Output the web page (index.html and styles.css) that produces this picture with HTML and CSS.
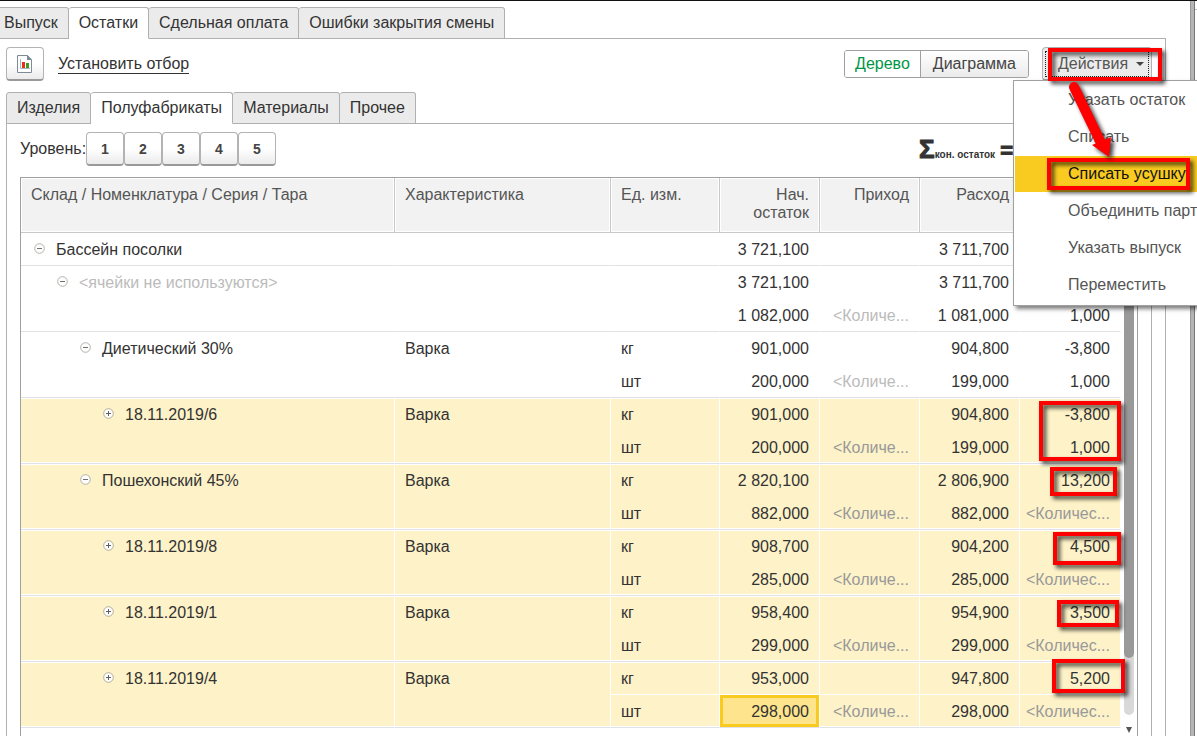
FILE: index.html
```html
<!DOCTYPE html>
<html lang="ru">
<head>
<meta charset="utf-8">
<title>Остатки</title>
<link rel="stylesheet" href="styles.css">
</head>
<body>
<svg class="defs" aria-hidden="true">
  <symbol id="minus" viewBox="0 0 11 11"><circle cx="5.5" cy="5.5" r="4.8" fill="#fff" stroke="#b3b0a8"/><path d="M3 5.5h5" stroke="#707070"/></symbol>
  <symbol id="plus" viewBox="0 0 11 11"><circle cx="5.5" cy="5.5" r="4.8" fill="#fff" stroke="#b3ad98"/><path d="M3 5.5h5M5.5 3v5" stroke="#606060"/></symbol>
</svg>
<div class="app">
  <main class="main">
    <nav class="tabs tabs-outer">
      <button class="tab tab-cut">Выпуск</button><button class="tab active">Остатки</button><button class="tab">Сдельная оплата</button><button class="tab">Ошибки закрытия смены</button>
    </nav>
    <section class="page">
      <div class="toolbar">
        <button class="btn" aria-label="Отчет">
          <svg width="16" height="18" viewBox="0 0 16 18"><path d="M.5 .5h10l4 4v13H.5z" fill="#fff" stroke="#7d8b97"/><path d="M10 0l5 5h-5z" fill="#7d8b97"/><path d="M3.500 4v9.500H13" fill="none" stroke="#a9b3bb"/><path d="M5 7h3v6H5z" fill="#e5321f"/><path d="M9 8h3v5H9z" fill="#3f9a1f"/></svg>
        </button>
        <a class="filter" href="#">Установить отбор</a>
        <div class="segment">
          <button class="seg on">Дерево</button><button class="seg">Диаграмма</button>
        </div>
        <div class="actions">
          <button class="btn btn-actions"><span class="focus">Действия<svg width="8" height="4" viewBox="0 0 8 4"><path d="M0 0h8L4 4z" fill="#444"/></svg></span></button>
          <div class="menu">
            <button class="item">Указать остаток</button>
            <button class="item">Списать</button>
            <button class="item current">Списать усушку</button>
            <button class="item">Объединить партии</button>
            <button class="item">Указать выпуск</button>
            <button class="item">Переместить</button>
          </div>
        </div>
      </div>
      <nav class="tabs tabs-inner">
        <button class="tab">Изделия</button><button class="tab active">Полуфабрикаты</button><button class="tab">Материалы</button><button class="tab">Прочее</button>
      </nav>
      <section class="sheet">
        <div class="levels">
          <span>Уровень:</span>
          <button class="btn">1</button><button class="btn">2</button><button class="btn">3</button><button class="btn">4</button><button class="btn">5</button>
          <div class="sum"><span class="sigma">Σ</span><span class="sub">кон. остаток</span><span class="eq">=</span></div>
        </div>
        <div class="grid">
          <table>
            <colgroup><col><col class="c-char"><col class="c-unit"><col class="c-num"><col class="c-num"><col class="c-num"><col class="c-last"></colgroup>
            <thead>
              <tr><th>Склад / Номенклатура / Серия / Тара</th><th>Характеристика</th><th>Ед. изм.</th><th class="num">Нач. остаток</th><th class="num">Приход</th><th class="num">Расход</th><th></th></tr>
            </thead>
            <tbody>
              <tr class="end"><td><span class="node"><svg><use href="#minus"/></svg>Бассейн посолки</span></td><td></td><td></td><td class="num">3 721,100</td><td></td><td class="num">3 711,700</td><td></td></tr>
            </tbody>
            <tbody>
              <tr><td rowspan="2" class="tall"><span class="node l1 muted"><svg><use href="#minus"/></svg>&lt;ячейки не используются&gt;</span></td><td rowspan="2" class="tall"></td><td></td><td class="num">3 721,100</td><td></td><td class="num">3 711,700</td><td></td></tr>
              <tr class="end"><td></td><td class="num">1 082,000</td><td class="num muted">&lt;Количе...</td><td class="num">1 081,000</td><td class="num">1,000</td></tr>
            </tbody>
            <tbody>
              <tr><td rowspan="2" class="tall"><span class="node l2"><svg><use href="#minus"/></svg>Диетический 30%</span></td><td rowspan="2" class="tall">Варка</td><td>кг</td><td class="num">901,000</td><td></td><td class="num">904,800</td><td class="num">-3,800</td></tr>
              <tr class="end"><td>шт</td><td class="num">200,000</td><td class="num muted">&lt;Количе...</td><td class="num">199,000</td><td class="num">1,000</td></tr>
            </tbody>
            <tbody class="sel">
              <tr class="start"><td rowspan="2" class="tall"><span class="node l3"><svg><use href="#plus"/></svg>18.11.2019/6</span></td><td rowspan="2" class="tall">Варка</td><td>кг</td><td class="num">901,000</td><td></td><td class="num">904,800</td><td class="num">-3,800</td></tr>
              <tr class="end"><td>шт</td><td class="num">200,000</td><td class="num muted">&lt;Количе...</td><td class="num">199,000</td><td class="num">1,000</td></tr>
            </tbody>
            <tbody class="sel">
              <tr class="start"><td rowspan="2" class="tall"><span class="node l2"><svg><use href="#minus"/></svg>Пошехонский 45%</span></td><td rowspan="2" class="tall">Варка</td><td>кг</td><td class="num">2 820,100</td><td></td><td class="num">2 806,900</td><td class="num">13,200</td></tr>
              <tr class="end"><td>шт</td><td class="num">882,000</td><td class="num muted">&lt;Количе...</td><td class="num">882,000</td><td class="num muted">&lt;Количес...</td></tr>
            </tbody>
            <tbody class="sel">
              <tr class="start"><td rowspan="2" class="tall"><span class="node l3"><svg><use href="#plus"/></svg>18.11.2019/8</span></td><td rowspan="2" class="tall">Варка</td><td>кг</td><td class="num">908,700</td><td></td><td class="num">904,200</td><td class="num">4,500</td></tr>
              <tr class="end"><td>шт</td><td class="num">285,000</td><td class="num muted">&lt;Количе...</td><td class="num">285,000</td><td class="num muted">&lt;Количес...</td></tr>
            </tbody>
            <tbody class="sel">
              <tr class="start"><td rowspan="2" class="tall"><span class="node l3"><svg><use href="#plus"/></svg>18.11.2019/1</span></td><td rowspan="2" class="tall">Варка</td><td>кг</td><td class="num">958,400</td><td></td><td class="num">954,900</td><td class="num">3,500</td></tr>
              <tr class="end"><td>шт</td><td class="num">299,000</td><td class="num muted">&lt;Количе...</td><td class="num">299,000</td><td class="num muted">&lt;Количес...</td></tr>
            </tbody>
            <tbody class="sel split">
              <tr class="start"><td rowspan="2" class="tall"><span class="node l3"><svg><use href="#plus"/></svg>18.11.2019/4</span></td><td rowspan="2" class="tall">Варка</td><td>кг</td><td class="num">953,000</td><td></td><td class="num">947,800</td><td class="num">5,200</td></tr>
              <tr class="end"><td>шт</td><td class="num cell-current">298,000</td><td class="num muted">&lt;Количе...</td><td class="num">298,000</td><td class="num muted">&lt;Количес...</td></tr>
            </tbody>
          </table>
          <div class="scroll">
            <div class="track"><div class="thumb"></div></div>
            <svg width="6" height="6" viewBox="0 0 6 6"><path d="M0 0h6L3 6z" fill="#555"/></svg>
          </div>
        </div>
      </section>
    </section>
  </main>
  <div class="splitter"></div>
  <aside class="side"></aside>
  <svg class="marks" width="197" height="736" viewBox="1000 0 197 736" aria-hidden="true">
    <g fill="none" stroke="#f00" stroke-width="4">
      <path d="M1050 50h110v29h-110z"/>
      <path d="M1049 160h139v28h-139z"/>
      <path d="M1041 403h78v56h-78z"/>
      <path d="M1052 469h63v25h-63z"/>
      <path d="M1055 534h64v29h-64z"/>
      <path d="M1059 602h58v23h-58z"/>
      <path d="M1054 661h69v30h-69z"/>
    </g>
    <g fill="#f00"><path d="M1074 87L1101 143" stroke="#f00" stroke-width="10" stroke-linecap="round"/><path d="M1092 145L1111 137L1109 157z"/></g>
  </svg>
</div>
</body>
</html>
```
FILE: styles.css
```css
* { box-sizing: border-box; }
body { margin: 0; font: 16px/18px "Liberation Sans", Arial, sans-serif; color: #333; background: #fff; }
button { font: inherit; color: inherit; margin: 0; cursor: pointer; }
.defs { display: none; }
.app { position: relative; display: flex; height: 100vh; overflow: hidden; border-top: 1px solid #111; }
.main { flex: 1; min-width: 0; display: flex; flex-direction: column; padding: 6px 24px 0 0; }
.splitter { width: 5px; background: #b5b5b5; border-left: 1px solid #999; border-right: 1px solid #777; }
.side { width: 2px; margin-top: 8px; border-top: 1px solid #bbb; }

.tabs { display: flex; position: relative; z-index: 1; margin-bottom: -1px; }
.tab { height: 32px; padding: 0 10px; border: 1px solid #b0b0b0; border-left-width: 0; border-radius: 3px 3px 0 0; background: #ebebeb; white-space: nowrap; }
.tab:first-child { border-left-width: 1px; }
.tab-cut { padding-left: 4px; border-top-left-radius: 0; }
.tab-cut:first-child { border-left-width: 0; }
.tab.active { background: #fff; border-bottom-color: #fff; }

.page { flex: 1; min-height: 0; display: flex; flex-direction: column; border: 1px solid #b0b0b0; border-width: 1px 1px 0 0; padding: 8px 13px 0 6px; }
.toolbar { display: flex; align-items: center; height: 34px; margin-bottom: 11px; }
.btn { display: flex; align-items: center; justify-content: center; width: 38px; height: 34px; padding: 0; border: 1px solid #b3b3b3; border-bottom: 2px solid #999; border-radius: 4px; background: linear-gradient(#fff 50%, #ebebeb); }
.filter { margin-left: 14px; color: #333; text-decoration: none; border-bottom: 1px solid #333; }
.segment { display: flex; margin-left: auto; margin-right: 13px; height: 28px; border: 1px solid #a0a0a0; border-radius: 3px; overflow: hidden; }
.seg { border: 0; padding: 0 12px; background: linear-gradient(#fff, #ebebeb); color: #444; }
.seg.on { padding: 0 10px; background: #fff; color: #009646; border-right: 1px solid #a0a0a0; }
.actions { position: relative; z-index: 2; }
.btn-actions { width: 110px; color: #555; background: #ececec; }
.focus { display: flex; align-items: center; gap: 8px; height: 26px; padding: 0 4px 0 12px; border: 1px dotted #222; }
.menu { position: absolute; top: 33px; left: -29px; width: 230px; padding: 1px; border: 1px solid #a0a0a0; background: #fff; box-shadow: 3px 3px 4px rgba(0, 0, 0, .5); }
.item { display: block; width: 100%; height: 37px; padding: 0 0 0 53px; border: 0; border-bottom: 1px solid #fff; background: #fff; color: #555; text-align: left; white-space: nowrap; }
.item.current { background: #f9cb20; color: #111; }

.sheet { flex: 1; min-height: 0; display: flex; flex-direction: column; border: 1px solid #b0b0b0; border-bottom: 0; padding: 8px 13px 0; }
.levels { display: flex; align-items: center; margin-bottom: 11px; }
.levels > span { width: 66px; }
.levels .btn { font-weight: bold; font-size: 14px; color: #444; }
.sum { display: flex; align-items: baseline; margin: 6px 125px 0 auto; font-weight: bold; }
.sigma { font-size: 26px; -webkit-text-stroke: 1px #333; }
.sub { font-size: 10px; }
.eq { margin-left: 5px; font-size: 22px; -webkit-text-stroke: 1px #333; }

.grid { flex: 1; min-height: 0; display: flex; align-items: flex-start; border: 1px solid #a0a0a0; border-bottom: 0; }
table { flex: 1; width: 100%; table-layout: fixed; border-collapse: separate; border-spacing: 0; }
.c-char { width: 216px; }
.c-unit { width: 109px; }
.c-num { width: 100px; }
.c-last { width: 101px; }
th { height: 55px; padding: 8px 10px; border: 1px solid #c8c8c8; border-width: 0 1px 1px 0; background: #f2f2f2; box-shadow: inset 0 0 0 1px #fff; color: #555; font-weight: normal; text-align: left; vertical-align: top; }
td { height: 33px; padding: 8px 10px 0; border-right: 1px solid transparent; vertical-align: top; white-space: nowrap; }
td.num { padding-left: 4px; }
.num { text-align: right; }
.end td, .tall { border-bottom: 1px solid #e2e2e6; }
.muted { color: #bbb; }
.sel td { background: #fdf2c8; border-right-color: #fff; }
.sel .muted { color: #999; }
.sel .start td { box-shadow: inset 0 1px #fff; }
.sel .end td { box-shadow: inset 0 -1px #fff; }
.sel .start .tall { box-shadow: inset 0 1px #fff, inset 0 -1px #fff; }
.split .start td:not(.tall) { border-bottom: 1px solid #fff; }
.sel .end .cell-current { background: #fde48d; box-shadow: inset 0 0 0 3px #f9cb20; }
.node { display: flex; align-items: center; gap: 11px; padding-left: 3px; }
.node svg { width: 11px; height: 11px; margin-bottom: 3px; }
.l1 { padding-left: 26px; }
.l2 { padding-left: 49px; }
.l3 { padding-left: 72px; }
.scroll { align-self: stretch; display: flex; flex-direction: column; align-items: center; width: 16px; padding: 16px 1px 3px; }
.track { flex: 1; width: 10px; margin-bottom: 12px; border-radius: 5px; background: #d9d9d9; }
.thumb { height: 89%; border-radius: 5px; background: #999; }
.marks { position: absolute; top: -1px; right: 0; z-index: 3; pointer-events: none; }
.marks g { filter: drop-shadow(3px 3px 2px rgba(0, 0, 0, .75)); }
```
